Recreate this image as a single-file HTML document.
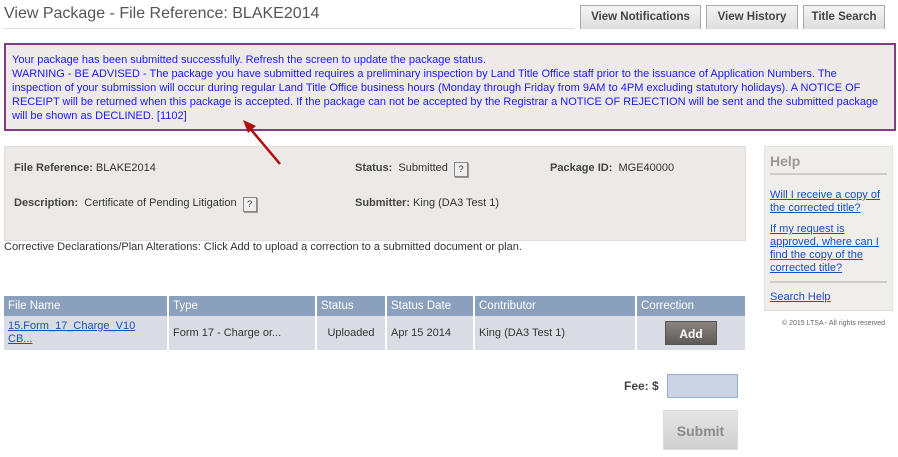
<!DOCTYPE html>
<html><head><meta charset="utf-8"><style>
*{box-sizing:border-box;margin:0;padding:0}
body{width:898px;height:457px;background:#fff;font-family:"Liberation Sans",sans-serif;font-size:11px;color:#333;position:relative;overflow:hidden}
.abs{position:absolute}
.tab{position:absolute;top:5px;height:24px;background:linear-gradient(#f4f4f4,#dedede);border:1px solid #aaa;border-bottom:none;font-weight:bold;font-size:11.5px;color:#444;text-align:center;line-height:22px}
.msg{left:4px;top:43px;width:892px;height:88px;border:2px solid #7d3f80;background:#eeeaea;color:#1a1aff;padding:8px 6px;line-height:14px;font-size:11px}
.info{left:4px;top:146px;width:742px;height:95px;background:#ede9e6;border:1px solid #ddd}
.info b{color:#444}
.q{display:inline-block;width:14px;height:15px;border:1px solid #888;background:#eee;font-size:9px;text-align:center;line-height:13px;box-shadow:1px 1px 0 #999;vertical-align:top}
.help{left:764px;top:146px;width:129px;height:165px;background:#f0eeeb;border:1px solid #e0e0e0;padding:6px 5px}
.help a{color:#1a4fc0;text-decoration:underline;display:block;line-height:13px;font-size:11px}
table{position:absolute;left:4px;top:296px;width:741px;border-collapse:collapse}
th{background:#8aa0bd;color:#fff;font-weight:normal;text-align:left;height:20px;padding:0 4px;border-right:2px solid #fff;font-size:11.5px}
td{background:#d9dde3;height:34px;padding:0 4px;border-right:2px solid #fff;font-size:11px}
</style></head><body>
<div class="abs" style="left:4px;top:5px;font-size:16px;color:#555">View Package - File Reference: BLAKE2014</div>
<div class="abs" style="left:4px;top:28px;width:570px;height:1px;background:#ddd"></div>
<div class="tab" style="left:580px;width:121px">View Notifications</div>
<div class="tab" style="left:706px;width:92px">View History</div>
<div class="tab" style="left:803px;width:82px">Title Search</div>
<div class="abs msg">Your package has been submitted successfully. Refresh the screen to update the package status.<br>WARNING - BE ADVISED - The package you have submitted requires a preliminary inspection by Land Title Office staff prior to the issuance of Application Numbers. The inspection of your submission will occur during regular Land Title Office business hours (Monday through Friday from 9AM to 4PM excluding statutory holidays). A NOTICE OF RECEIPT will be returned when this package is accepted. If the package can not be accepted by the Registrar a NOTICE OF REJECTION will be sent and the submitted package will be shown as DECLINED. [1102]</div>
<div class="abs info">
<div class="abs" style="left:9px;top:15px"><b>File Reference:</b> BLAKE2014</div>
<div class="abs" style="left:350px;top:15px"><b>Status:</b> &nbsp;Submitted &nbsp;<span class="q">?</span></div>
<div class="abs" style="left:545px;top:15px"><b>Package ID:</b> &nbsp;MGE40000</div>
<div class="abs" style="left:9px;top:50px"><b>Description:</b> &nbsp;Certificate of Pending Litigation &nbsp;<span class="q">?</span></div>
<div class="abs" style="left:350px;top:50px"><b>Submitter:</b> King (DA3 Test 1)</div>
</div>
<svg class="abs" style="left:240px;top:118px" width="50" height="50"><line x1="40" y1="46" x2="8" y2="8" stroke="#b01010" stroke-width="2.5"/><polygon points="3,2 16,8 8,15" fill="#b01010"/></svg>
<div class="abs" style="left:4px;top:241px">Corrective Declarations/Plan Alterations: Click Add to upload a correction to a submitted document or plan.</div>
<div class="abs help"><div style="font-size:14px;font-weight:bold;color:#999;padding-bottom:4px;border-bottom:2px solid #ccc;margin-bottom:14px">Help</div>
<a>Will I receive a copy of the corrected title?</a><a style="margin-top:8px">If my request is approved, where can I find the copy of the corrected title?</a>
<div style="border-top:2px solid #ccc;margin:6px 0 8px"></div><a>Search Help</a></div>
<div class="abs" style="left:782px;top:320px;font-size:7px;color:#666">© 2015 LTSA - All rights reserved</div>
<table><tr><th style="width:164px">File Name</th><th style="width:148px">Type</th><th style="width:70px">Status</th><th style="width:88px">Status Date</th><th style="width:162px">Contributor</th><th style="border:none">Correction</th></tr>
<tr><td><a style="color:#1a4fc0;text-decoration:underline;line-height:13px;display:block">15.Form_17_Charge_V10<br>CB...</a></td><td>Form 17 - Charge or...</td><td style="text-align:center">Uploaded</td><td>Apr 15 2014</td><td>King (DA3 Test 1)</td><td style="border:none;text-align:center"><span style="display:inline-block;width:52px;height:24px;background:linear-gradient(#8a8580,#5e5a55);color:#fff;font-weight:bold;font-size:12px;line-height:24px;border:1px solid #555">Add</span></td></tr></table>
<div class="abs" style="left:624px;top:379px;font-weight:bold;color:#444;font-size:12px">Fee: $</div>
<div class="abs" style="left:667px;top:374px;width:71px;height:24px;background:#c9d3e3;border:1px solid #9aaecb"></div>
<div class="abs" style="left:663px;top:410px;width:75px;height:40px;background:linear-gradient(#e6e6e6,#cfcfcf);border:1px solid #ddd;color:#8a8a8a;font-weight:bold;font-size:14px;text-align:center;line-height:40px">Submit</div>
</body></html>
